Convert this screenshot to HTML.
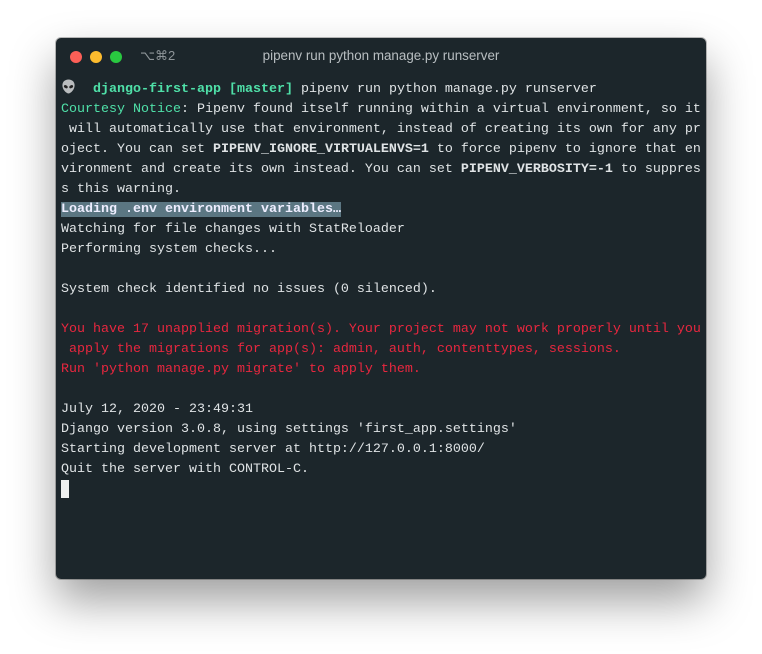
<!DOCTYPE html>
<html><head><meta charset="utf-8"><style>
html,body{margin:0;padding:0;background:#fff;width:762px;height:654px;overflow:hidden}
.win{position:absolute;left:56px;top:38px;width:650px;height:541px;background:#1c262b;border-radius:5px;box-shadow:0 22px 45px rgba(0,0,0,.38),0 0 0 1px rgba(0,0,0,.25)}
.dot{position:absolute;top:13px;width:12px;height:12px;border-radius:50%}
.title{position:absolute;top:10px;left:0;width:650px;text-align:center;font:13.4px "Liberation Sans",sans-serif;color:#b8bec1}
.kb{position:absolute;left:84px;top:10px;font:13px "Liberation Sans","DejaVu Sans",sans-serif;color:#8e9599}
.term{position:absolute;left:5px;top:42px;font-family:"Liberation Mono",monospace;font-size:13.33px;line-height:20px;color:#dfe3e5;white-space:pre}
.g{color:#4fe0a8}.b{font-weight:bold}.r{color:#e8273f}
.hl{background:#5b7682;font-weight:bold;color:#eef}
.cur{display:inline-block;width:8px;height:18px;background:#eef0f0;vertical-align:-4px}
</style></head><body>
<div class="win">
<div class="dot" style="left:14px;background:#fc5f57"></div>
<div class="dot" style="left:34px;background:#fdbc2e"></div>
<div class="dot" style="left:54px;background:#29c840"></div>
<div class="kb">⌥⌘2</div>
<div class="title">pipenv run python manage.py runserver</div>
<svg style="position:absolute;left:5px;top:41px" width="15" height="15" viewBox="0 0 13 14"><path d="M6.5 0.5C3 0.5 0.8 2.8 0.8 6c0 3.5 3.2 7.5 5.7 7.5s5.7-4 5.7-7.5C12.2 2.8 10 0.5 6.5 0.5z" fill="#b9bcbe"/><ellipse cx="4" cy="7.2" rx="1.9" ry="1.3" transform="rotate(30 4 7.2)" fill="#222"/><ellipse cx="9" cy="7.2" rx="1.9" ry="1.3" transform="rotate(-30 9 7.2)" fill="#222"/></svg>
<div class="term">    <span class="g b">django-first-app [master]</span> pipenv run python manage.py runserver
<span class="g">Courtesy Notice</span>: Pipenv found itself running within a virtual environment, so it
 will automatically use that environment, instead of creating its own for any pr
oject. You can set <b>PIPENV_IGNORE_VIRTUALENVS=1</b> to force pipenv to ignore that en
vironment and create its own instead. You can set <b>PIPENV_VERBOSITY=-1</b> to suppres
s this warning.
<span class="hl">Loading .env environment variables…</span>
Watching for file changes with StatReloader
Performing system checks...

System check identified no issues (0 silenced).

<span class="r">You have 17 unapplied migration(s). Your project may not work properly until you
 apply the migrations for app(s): admin, auth, contenttypes, sessions.
Run 'python manage.py migrate' to apply them.</span>

July 12, 2020 - 23:49:31
Django version 3.0.8, using settings 'first_app.settings'
Starting development server at http://127.0.0.1:8000/
Quit the server with CONTROL-C.
<span class="cur"></span></div>
</div>
</body></html>
